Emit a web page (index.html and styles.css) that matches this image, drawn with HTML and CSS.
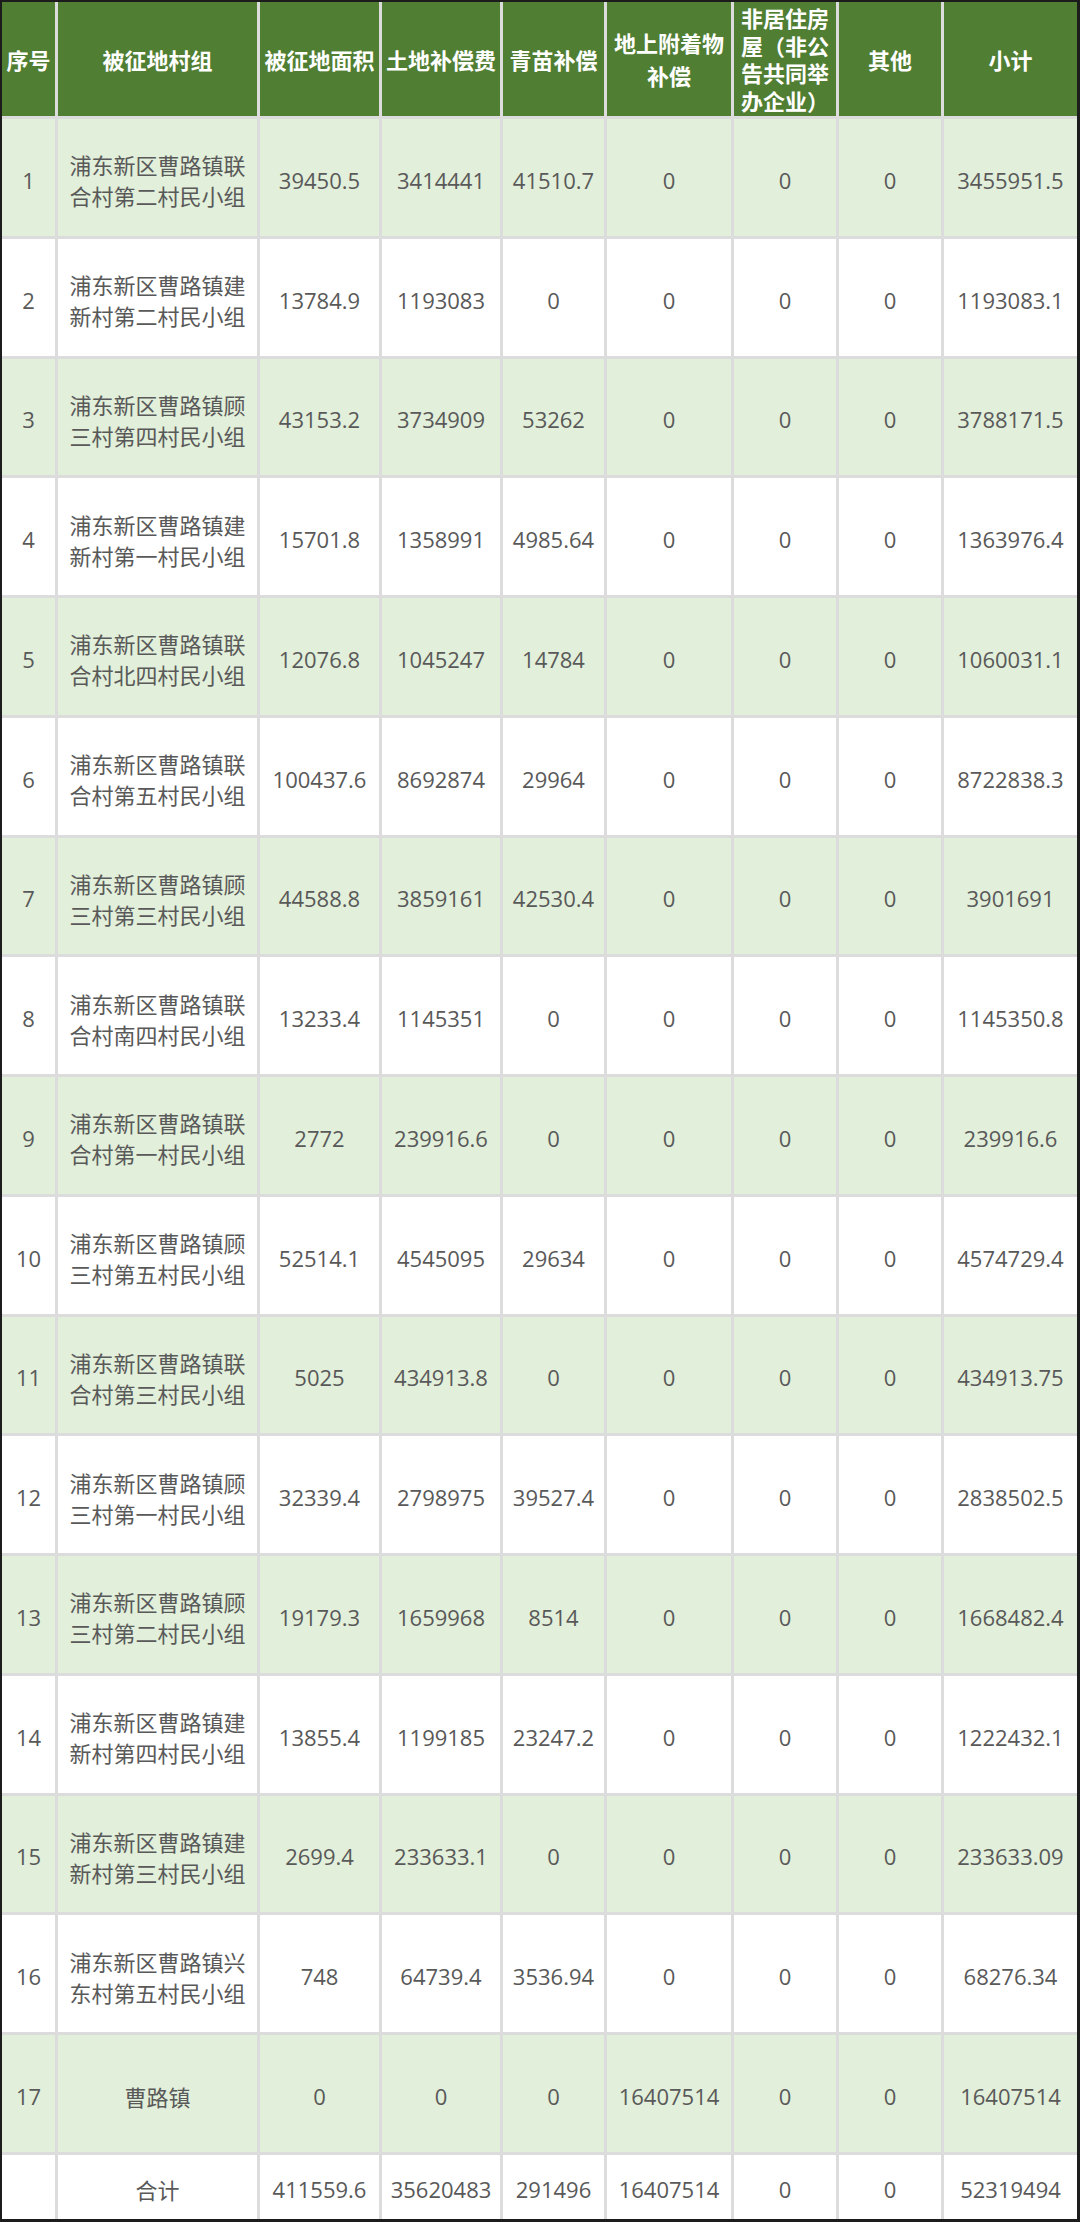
FILE: index.html
```html
<!DOCTYPE html>
<html lang="zh-CN">
<head>
<meta charset="utf-8">
<title>征地补偿</title>
<link rel="stylesheet" href="styles.css">
</head>
<body>
<div class="sheet">
  <div class="c h">序号</div><div class="c h">被征地村组</div><div class="c h">被征地面积</div><div class="c h">土地补偿费</div><div class="c h">青苗补偿</div><div class="c h">地上附着物补偿</div><div class="c h tight">非居住房屋（非公告共同举办企业）</div><div class="c h">其他</div><div class="c h">小计</div>

  <div class="c g">1</div><div class="c g t">浦东新区曹路镇联合村第二村民小组</div><div class="c g">39450.5</div><div class="c g">3414441</div><div class="c g">41510.7</div><div class="c g">0</div><div class="c g">0</div><div class="c g">0</div><div class="c g">3455951.5</div>
  <div class="c">2</div><div class="c t">浦东新区曹路镇建新村第二村民小组</div><div class="c">13784.9</div><div class="c">1193083</div><div class="c">0</div><div class="c">0</div><div class="c">0</div><div class="c">0</div><div class="c">1193083.1</div>
  <div class="c g">3</div><div class="c g t">浦东新区曹路镇顾三村第四村民小组</div><div class="c g">43153.2</div><div class="c g">3734909</div><div class="c g">53262</div><div class="c g">0</div><div class="c g">0</div><div class="c g">0</div><div class="c g">3788171.5</div>
  <div class="c">4</div><div class="c t">浦东新区曹路镇建新村第一村民小组</div><div class="c">15701.8</div><div class="c">1358991</div><div class="c">4985.64</div><div class="c">0</div><div class="c">0</div><div class="c">0</div><div class="c">1363976.4</div>
  <div class="c g">5</div><div class="c g t">浦东新区曹路镇联合村北四村民小组</div><div class="c g">12076.8</div><div class="c g">1045247</div><div class="c g">14784</div><div class="c g">0</div><div class="c g">0</div><div class="c g">0</div><div class="c g">1060031.1</div>
  <div class="c">6</div><div class="c t">浦东新区曹路镇联合村第五村民小组</div><div class="c">100437.6</div><div class="c">8692874</div><div class="c">29964</div><div class="c">0</div><div class="c">0</div><div class="c">0</div><div class="c">8722838.3</div>
  <div class="c g">7</div><div class="c g t">浦东新区曹路镇顾三村第三村民小组</div><div class="c g">44588.8</div><div class="c g">3859161</div><div class="c g">42530.4</div><div class="c g">0</div><div class="c g">0</div><div class="c g">0</div><div class="c g">3901691</div>
  <div class="c">8</div><div class="c t">浦东新区曹路镇联合村南四村民小组</div><div class="c">13233.4</div><div class="c">1145351</div><div class="c">0</div><div class="c">0</div><div class="c">0</div><div class="c">0</div><div class="c">1145350.8</div>
  <div class="c g">9</div><div class="c g t">浦东新区曹路镇联合村第一村民小组</div><div class="c g">2772</div><div class="c g">239916.6</div><div class="c g">0</div><div class="c g">0</div><div class="c g">0</div><div class="c g">0</div><div class="c g">239916.6</div>
  <div class="c">10</div><div class="c t">浦东新区曹路镇顾三村第五村民小组</div><div class="c">52514.1</div><div class="c">4545095</div><div class="c">29634</div><div class="c">0</div><div class="c">0</div><div class="c">0</div><div class="c">4574729.4</div>
  <div class="c g">11</div><div class="c g t">浦东新区曹路镇联合村第三村民小组</div><div class="c g">5025</div><div class="c g">434913.8</div><div class="c g">0</div><div class="c g">0</div><div class="c g">0</div><div class="c g">0</div><div class="c g">434913.75</div>
  <div class="c">12</div><div class="c t">浦东新区曹路镇顾三村第一村民小组</div><div class="c">32339.4</div><div class="c">2798975</div><div class="c">39527.4</div><div class="c">0</div><div class="c">0</div><div class="c">0</div><div class="c">2838502.5</div>
  <div class="c g">13</div><div class="c g t">浦东新区曹路镇顾三村第二村民小组</div><div class="c g">19179.3</div><div class="c g">1659968</div><div class="c g">8514</div><div class="c g">0</div><div class="c g">0</div><div class="c g">0</div><div class="c g">1668482.4</div>
  <div class="c">14</div><div class="c t">浦东新区曹路镇建新村第四村民小组</div><div class="c">13855.4</div><div class="c">1199185</div><div class="c">23247.2</div><div class="c">0</div><div class="c">0</div><div class="c">0</div><div class="c">1222432.1</div>
  <div class="c g">15</div><div class="c g t">浦东新区曹路镇建新村第三村民小组</div><div class="c g">2699.4</div><div class="c g">233633.1</div><div class="c g">0</div><div class="c g">0</div><div class="c g">0</div><div class="c g">0</div><div class="c g">233633.09</div>
  <div class="c">16</div><div class="c t">浦东新区曹路镇兴东村第五村民小组</div><div class="c">748</div><div class="c">64739.4</div><div class="c">3536.94</div><div class="c">0</div><div class="c">0</div><div class="c">0</div><div class="c">68276.34</div>
  <div class="c g">17</div><div class="c g t">曹路镇</div><div class="c g">0</div><div class="c g">0</div><div class="c g">0</div><div class="c g">16407514</div><div class="c g">0</div><div class="c g">0</div><div class="c g">16407514</div>

  <div class="c"></div><div class="c t">合计</div><div class="c">411559.6</div><div class="c">35620483</div><div class="c">291496</div><div class="c">16407514</div><div class="c">0</div><div class="c">0</div><div class="c">52319494</div>
</div>
</body>
</html>
```

FILE: styles.css
```css
html, body {
  margin: 0;
  padding: 0;
  background: #ffffff;
}

.sheet {
  width: 1080px;
  height: 2222px;
  box-sizing: border-box;
  border-style: solid;
  border-color: #1c1c1c;
  border-width: 2px 3px 3px 2px;
  background: #dcdcdc;
  display: grid;
  grid-template-columns: 53px 199px 119px 118px 101px 124px 102px 102px 133px;
  grid-template-rows: 114px repeat(17, 116.76px) 64px;
  gap: 3px;
  font-family: "Open Sans", "Noto Sans CJK SC", sans-serif;
  font-size: 22px;
  color: #595959;
}

.c {
  background: #ffffff;
  display: flex;
  align-items: center;
  justify-content: center;
  text-align: center;
  line-height: 31px;
  padding-top: 6px;
  box-sizing: border-box;
}

.g {
  background: #e2efda;
}

.t {
  font-family: "Noto Sans CJK SC", sans-serif;
  padding-left: 10px;
  padding-right: 10px;
}

.h {
  background: #507e32;
  color: #ffffff;
  font-family: "Noto Sans CJK SC", sans-serif;
  font-weight: 700;
  line-height: 33px;
  padding: 0 2px;
}

.tight {
  line-height: 27.5px;
}
```
